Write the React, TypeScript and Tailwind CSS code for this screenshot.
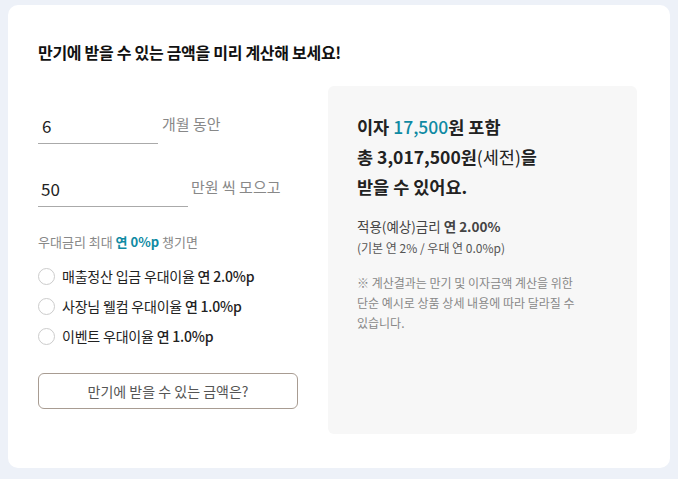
import { useState } from "react";

const options = [
  { label: "매출정산 입금 우대이율", rate: "연 2.0%p" },
  { label: "사장님 웰컴 우대이율", rate: "연 1.0%p" },
  { label: "이벤트 우대이율", rate: "연 1.0%p" },
];

const App = () => {
  const [months, setMonths] = useState("6");
  const [amount, setAmount] = useState("50");

  return (
    <div
      className="min-h-[479px] bg-[#edf1f8] px-[8px] pt-[5px] pb-[11px]"
      style={{ fontFamily: '"Noto Sans CJK KR", "Noto Sans", sans-serif' }}
    >
      <div className="bg-white rounded-[10px] px-[30px] pt-[34px] pb-[34px]">
        <h2 className="text-[16px] leading-[26px] font-bold text-[#111] tracking-[-0.3px]">
          만기에 받을 수 있는 금액을 미리 계산해 보세요!
        </h2>

        <div className="mt-[21px] flex gap-[30px]">
          <div className="w-[260px] pt-[21px] flex flex-col">
            <div className="flex items-center">
              <input
                value={months}
                onChange={(e) => setMonths(e.target.value)}
                className="w-[120px] h-[37px] border-b border-[#aaa] pl-[4px] text-[17px] text-[#222] outline-none"
              />
              <span className="ml-[4px] -mt-[2px] text-[15px] text-[#888]">개월 동안</span>
            </div>
            <div className="mt-[26px] flex items-center">
              <input
                value={amount}
                onChange={(e) => setAmount(e.target.value)}
                className="w-[150px] h-[37px] border-b border-[#aaa] pl-[3px] text-[17px] text-[#222] outline-none"
              />
              <span className="ml-[3px] -mt-[2px] text-[15px] text-[#888]">만원 씩 모으고</span>
            </div>

            <p className="mt-[25px] text-[13px] leading-[20px] text-[#888]">
              우대금리 최대 <span className="font-semibold text-[#0f8aa3]">연 0%p</span> 챙기면
            </p>

            <div className="mt-[14px] flex flex-col gap-[10px]">
              {options.map((o) => (
                <label key={o.label} className="flex items-center gap-[7px] h-[20px]">
                  <span className="w-[17px] h-[17px] rounded-full border border-[#ccc] bg-white" />
                  <span className="text-[14px] text-[#222] tracking-[-0.2px]">
                    {o.label} <span className="font-medium">{o.rate}</span>
                  </span>
                </label>
              ))}
            </div>

            <button className="mt-[27px] w-[260px] h-[36px] rounded-[6px] border border-[#a89c92] text-[14px] text-[#555]">
              만기에 받을 수 있는 금액은?
            </button>
          </div>

          <div className="w-[309px] h-[348px] bg-[#f7f7f7] rounded-[6px] px-[29px] pt-[26px]">
            <p className="text-[17.5px] leading-[30px] font-semibold text-[#222]">
              이자 <span className="font-medium text-[#0f8aa3]">17,500</span>원 포함
            </p>
            <p className="text-[17.5px] leading-[30px] font-semibold text-[#222]">
              총 3,017,500원<span className="font-normal">(세전)</span>을
            </p>
            <p className="text-[17.5px] leading-[30px] font-semibold text-[#222]">
              받을 수 있어요.
            </p>

            <p className="mt-[14px] text-[13.5px] leading-[20px] text-[#444]">
              적용(예상)금리 <span className="font-semibold">연 2.00%</span>
            </p>
            <p className="mt-[3px] text-[12px] leading-[18px] text-[#555]">
              (기본 연 2% / 우대 연 0.0%p)
            </p>

            <p className="mt-[16px] text-[12px] leading-[20px] text-[#888]">
              ※ 계산결과는 만기 및 이자금액 계산을 위한
              <br />
              단순 예시로 상품 상세 내용에 따라 달라질 수
              <br />
              있습니다.
            </p>
          </div>
        </div>
      </div>
    </div>
  );
};

export default App;
